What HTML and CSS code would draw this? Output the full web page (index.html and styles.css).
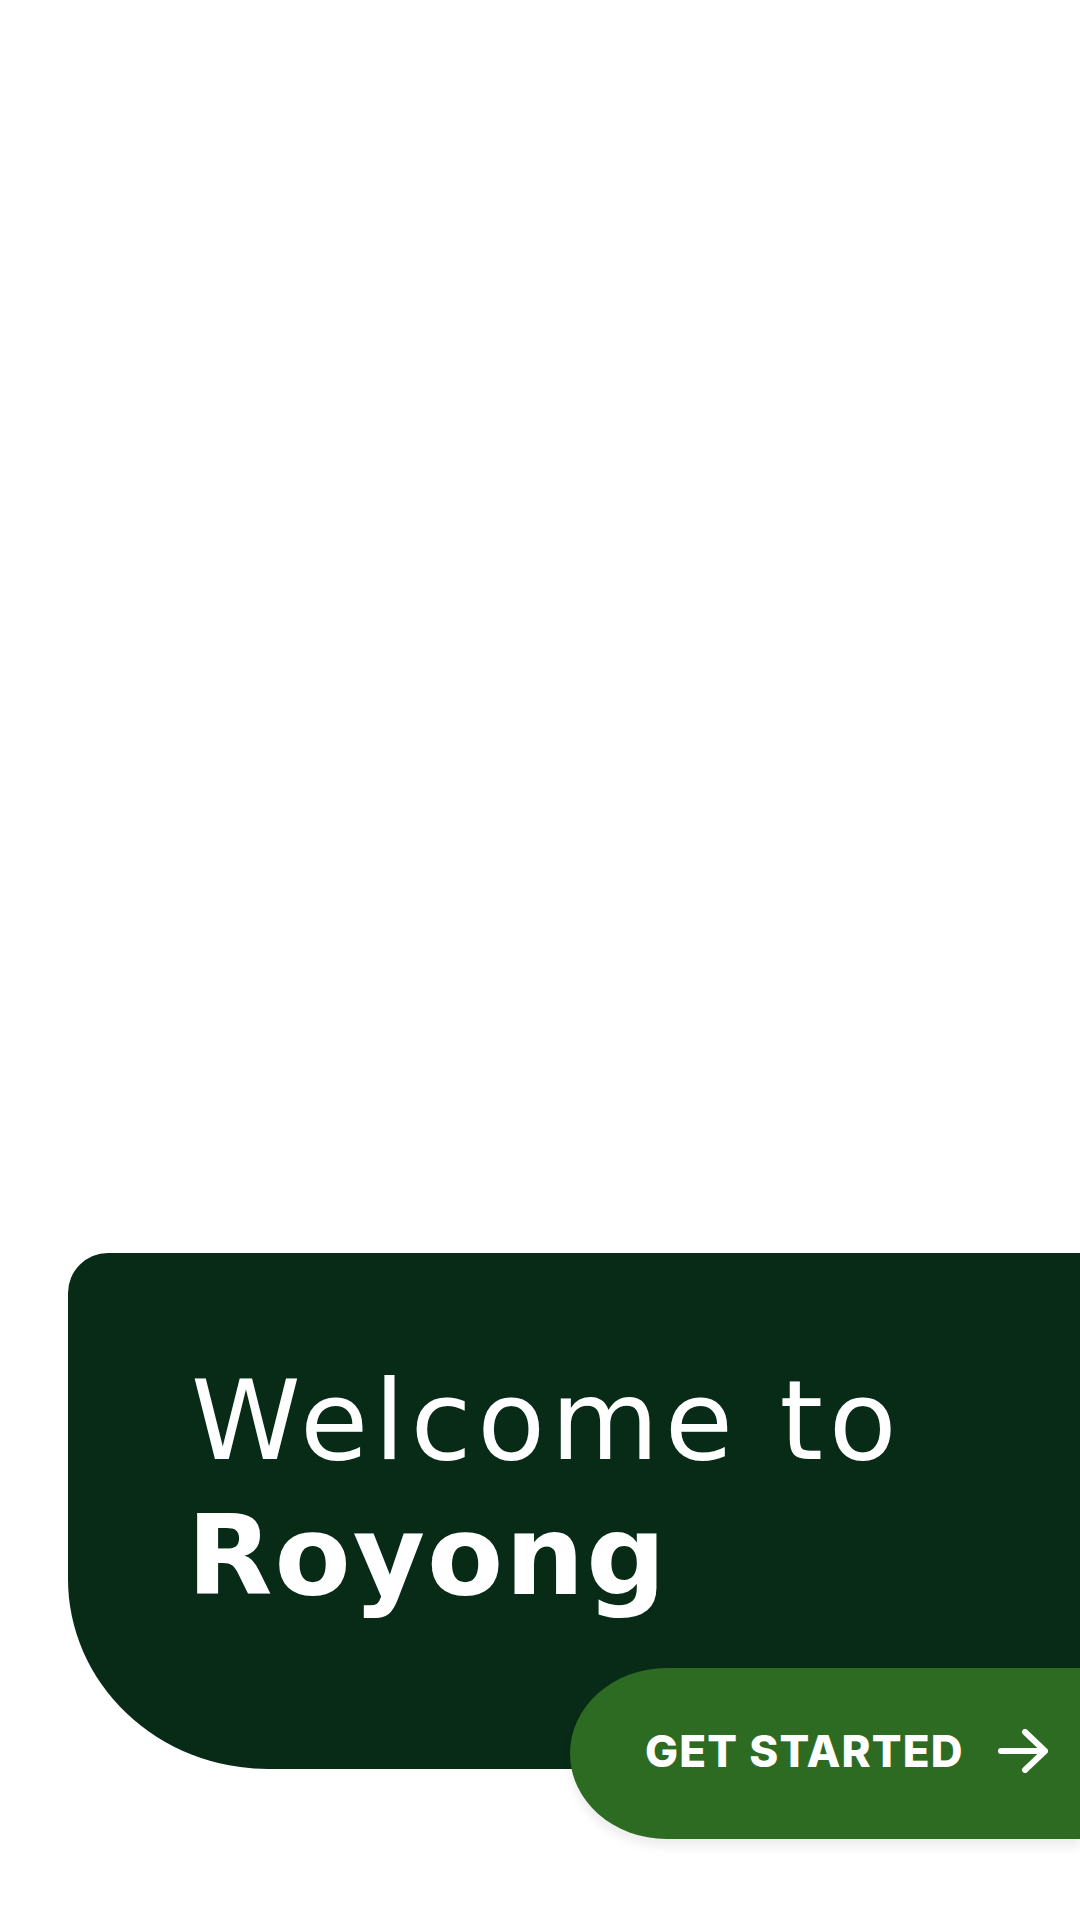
FILE: index.html
```html
<!DOCTYPE html>
<html lang="en">
<head>
<meta charset="utf-8">
<title>Welcome to Royong</title>
<link rel="stylesheet" href="styles.css">
</head>
<body>
<main class="screen">
  <section class="welcome-card">
    <h1 class="title">
      <span class="title-light">Welcome to</span>
      <span class="title-bold">Royong</span>
    </h1>
  </section>
  <button class="start-btn" type="button">
    <span class="start-label">GET STARTED</span>
    <svg class="start-arrow" width="50" height="44" viewBox="0 0 50 44" aria-hidden="true">
      <path d="M3 22 H47 M27 3 L47 22 L27 41" fill="none" stroke="#ffffff" stroke-width="6" stroke-linecap="round" stroke-linejoin="round"/>
    </svg>
  </button>
</main>
</body>
</html>
```

FILE: styles.css
```css
* { box-sizing: border-box; }

html, body {
  margin: 0;
  padding: 0;
  background: #ffffff;
}

.screen {
  width: 1080px;
  height: 1920px;
  display: flex;
  flex-direction: column;
  justify-content: flex-end;
  padding-bottom: 81px;
  overflow: hidden;
  font-family: "DejaVu Sans", "Liberation Sans", sans-serif;
}

.welcome-card {
  margin-left: 68px;
  height: 516px;
  background: #082b18;
  border-top-left-radius: 40px;
  border-bottom-left-radius: 200px 190px;
  padding: 100px 0 0 123px;
}

.title {
  margin: 0;
  color: #ffffff;
  display: flex;
  flex-direction: column;
  align-items: flex-start;
  line-height: 135px;
  font-weight: 400;
}

.title-light {
  font-size: 111px;
  font-weight: 400;
  letter-spacing: 5.7px;
}

.title-bold {
  margin-left: -4px;
  font-size: 111px;
  font-weight: 700;
  letter-spacing: 2px;
}

.start-btn {
  align-self: flex-end;
  margin-top: -101px;
  width: 510px;
  height: 171px;
  border: none;
  background: #2e6b22;
  border-radius: 97px 0 0 97px / 86px 0 0 86px;
  box-shadow: 0 8px 10px rgba(0, 0, 0, 0.07);
  display: flex;
  align-items: center;
  padding: 0 0 5px 75px;
  gap: 34px;
  font-family: Inter, "Liberation Sans", sans-serif;
  cursor: pointer;
}

.start-label {
  color: #ffffff;
  font-size: 44px;
  font-weight: 800;
  letter-spacing: 1.2px;
  line-height: 1;
}

.start-arrow {
  display: block;
  flex: none;
}
```
